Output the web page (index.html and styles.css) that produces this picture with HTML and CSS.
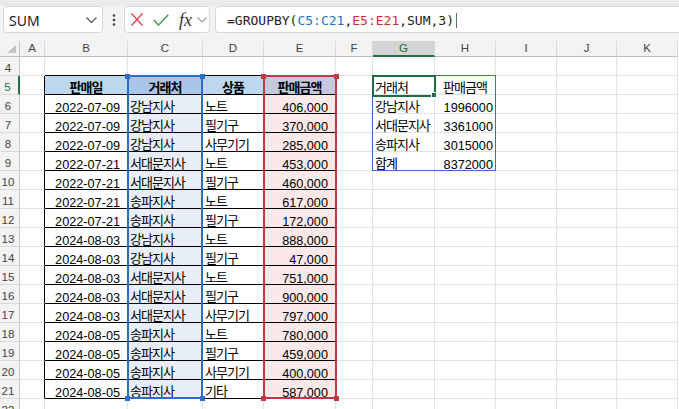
FILE: index.html
```html
<!DOCTYPE html>
<html lang="ko">
<head>
<meta charset="utf-8">
<link rel="stylesheet" href="styles.css">
</head>
<body>
<div class="edge"></div>
<div class="fbar">
  <div class="box namebox"><span>SUM</span><svg width="11" height="6" viewBox="0 0 11 6"><polyline points="0.5,0.5 5.5,5.5 10.5,0.5" fill="none" stroke="#555" stroke-width="1.2"/></svg></div>
  <div class="dots"><svg width="4" height="12" viewBox="0 0 4 12"><circle cx="2" cy="1.5" r="1.3" fill="#444"/><circle cx="2" cy="6" r="1.3" fill="#444"/><circle cx="2" cy="10.5" r="1.3" fill="#444"/></svg></div>
  <div class="box fxbox">
    <svg class="ic-x" width="12" height="13" viewBox="0 0 12 13"><path d="M0.5 0.5L11.5 12.5M11.5 0.5L0.5 12.5" stroke="#e0454f" stroke-width="1.3" fill="none"/></svg>
    <svg class="ic-ok" width="16" height="12" viewBox="0 0 16 12"><polyline points="0.7,6 5.5,11 15.3,0.7" fill="none" stroke="#3a9e4c" stroke-width="1.4"/></svg>
    <span class="fx">fx</span>
    <svg class="ic-dd" width="10" height="6" viewBox="0 0 10 6"><polyline points="0.5,0.5 5,5 9.5,0.5" fill="none" stroke="#9a9a9a" stroke-width="1.1"/></svg>
  </div>
  <div class="box formula"><span>=GROUPBY(<span class="rb">C5:C21</span>,<span class="rr">E5:E21</span>,SUM,3)</span><span class="caret"></span></div>
</div>

<div class="sheet">
  <div class="corner"><svg width="9" height="8" viewBox="0 0 9 8"><polygon points="9,0 9,8 0,8" fill="#c4c4c4"/></svg></div>
  <div class="ch">A</div><div class="ch">B</div><div class="ch">C</div><div class="ch">D</div><div class="ch">E</div><div class="ch">F</div><div class="ch sel">G</div><div class="ch">H</div><div class="ch">I</div><div class="ch">J</div><div class="ch">K</div>

  <div class="rh">4</div><div class="c"></div><div class="c tt"></div><div class="c tt"></div><div class="c tt"></div><div class="c tt"></div><div class="c"></div><div class="c"></div><div class="c"></div><div class="c"></div><div class="c"></div><div class="c"></div>

  <div class="rh sel">5</div><div class="c ta"></div><div class="c tb k hd">판매일</div><div class="c tb k hd hc">거래처</div><div class="c tb k hd">상품</div><div class="c tb k hd he">판매금액</div><div class="c"></div><div class="c k">거래처</div><div class="c k ctr">판매금액</div><div class="c"></div><div class="c"></div><div class="c"></div>

  <div class="rh">6</div><div class="c ta"></div><div class="c tb n pr">2022-07-09</div><div class="c tb k fc">강남지사</div><div class="c tb k">노트</div><div class="c tb n pr fe">406,000</div><div class="c"></div><div class="c k">강남지사</div><div class="c n">1996000</div><div class="c"></div><div class="c"></div><div class="c"></div>

  <div class="rh">7</div><div class="c ta"></div><div class="c tb n pr">2022-07-09</div><div class="c tb k fc">강남지사</div><div class="c tb k">필기구</div><div class="c tb n pr fe">370,000</div><div class="c"></div><div class="c k">서대문지사</div><div class="c n">3361000</div><div class="c"></div><div class="c"></div><div class="c"></div>

  <div class="rh">8</div><div class="c ta"></div><div class="c tb n pr">2022-07-09</div><div class="c tb k fc">강남지사</div><div class="c tb k">사무기기</div><div class="c tb n pr fe">285,000</div><div class="c"></div><div class="c k">송파지사</div><div class="c n">3015000</div><div class="c"></div><div class="c"></div><div class="c"></div>

  <div class="rh">9</div><div class="c ta"></div><div class="c tb n pr">2022-07-21</div><div class="c tb k fc">서대문지사</div><div class="c tb k">노트</div><div class="c tb n pr fe">453,000</div><div class="c"></div><div class="c k">합계</div><div class="c n">8372000</div><div class="c"></div><div class="c"></div><div class="c"></div>

  <div class="rh">10</div><div class="c ta"></div><div class="c tb n pr">2022-07-21</div><div class="c tb k fc">서대문지사</div><div class="c tb k">필기구</div><div class="c tb n pr fe">460,000</div><div class="c"></div><div class="c"></div><div class="c"></div><div class="c"></div><div class="c"></div><div class="c"></div>

  <div class="rh">11</div><div class="c ta"></div><div class="c tb n pr">2022-07-21</div><div class="c tb k fc">송파지사</div><div class="c tb k">노트</div><div class="c tb n pr fe">617,000</div><div class="c"></div><div class="c"></div><div class="c"></div><div class="c"></div><div class="c"></div><div class="c"></div>

  <div class="rh">12</div><div class="c ta"></div><div class="c tb n pr">2022-07-21</div><div class="c tb k fc">송파지사</div><div class="c tb k">필기구</div><div class="c tb n pr fe">172,000</div><div class="c"></div><div class="c"></div><div class="c"></div><div class="c"></div><div class="c"></div><div class="c"></div>

  <div class="rh">13</div><div class="c ta"></div><div class="c tb n pr">2024-08-03</div><div class="c tb k fc">강남지사</div><div class="c tb k">노트</div><div class="c tb n pr fe">888,000</div><div class="c"></div><div class="c"></div><div class="c"></div><div class="c"></div><div class="c"></div><div class="c"></div>

  <div class="rh">14</div><div class="c ta"></div><div class="c tb n pr">2024-08-03</div><div class="c tb k fc">강남지사</div><div class="c tb k">필기구</div><div class="c tb n pr fe">47,000</div><div class="c"></div><div class="c"></div><div class="c"></div><div class="c"></div><div class="c"></div><div class="c"></div>

  <div class="rh">15</div><div class="c ta"></div><div class="c tb n pr">2024-08-03</div><div class="c tb k fc">서대문지사</div><div class="c tb k">노트</div><div class="c tb n pr fe">751,000</div><div class="c"></div><div class="c"></div><div class="c"></div><div class="c"></div><div class="c"></div><div class="c"></div>

  <div class="rh">16</div><div class="c ta"></div><div class="c tb n pr">2024-08-03</div><div class="c tb k fc">서대문지사</div><div class="c tb k">필기구</div><div class="c tb n pr fe">900,000</div><div class="c"></div><div class="c"></div><div class="c"></div><div class="c"></div><div class="c"></div><div class="c"></div>

  <div class="rh">17</div><div class="c ta"></div><div class="c tb n pr">2024-08-03</div><div class="c tb k fc">서대문지사</div><div class="c tb k">사무기기</div><div class="c tb n pr fe">797,000</div><div class="c"></div><div class="c"></div><div class="c"></div><div class="c"></div><div class="c"></div><div class="c"></div>

  <div class="rh">18</div><div class="c ta"></div><div class="c tb n pr">2024-08-05</div><div class="c tb k fc">송파지사</div><div class="c tb k">노트</div><div class="c tb n pr fe">780,000</div><div class="c"></div><div class="c"></div><div class="c"></div><div class="c"></div><div class="c"></div><div class="c"></div>

  <div class="rh">19</div><div class="c ta"></div><div class="c tb n pr">2024-08-05</div><div class="c tb k fc">송파지사</div><div class="c tb k">필기구</div><div class="c tb n pr fe">459,000</div><div class="c"></div><div class="c"></div><div class="c"></div><div class="c"></div><div class="c"></div><div class="c"></div>

  <div class="rh">20</div><div class="c ta"></div><div class="c tb n pr">2024-08-05</div><div class="c tb k fc">송파지사</div><div class="c tb k">사무기기</div><div class="c tb n pr fe">400,000</div><div class="c"></div><div class="c"></div><div class="c"></div><div class="c"></div><div class="c"></div><div class="c"></div>

  <div class="rh">21</div><div class="c ta"></div><div class="c tb n pr">2024-08-05</div><div class="c tb k fc">송파지사</div><div class="c tb k">기타</div><div class="c tb n pr fe">587,000</div><div class="c"></div><div class="c"></div><div class="c"></div><div class="c"></div><div class="c"></div><div class="c"></div>

  <div class="rh">22</div><div class="c"></div><div class="c"></div><div class="c"></div><div class="c"></div><div class="c"></div><div class="c"></div><div class="c"></div><div class="c"></div><div class="c"></div><div class="c"></div><div class="c"></div>

  <div class="rng blue"><span class="hdl h-tl"></span><span class="hdl h-tr"></span><span class="hdl h-bl"></span><span class="hdl h-br"></span></div>
  <div class="rng red"><span class="hdl h-tl"></span><span class="hdl h-tr"></span><span class="hdl h-bl"></span><span class="hdl h-br"></span></div>
  <div class="spill"></div>
  <div class="active"><span class="fill"></span></div>
</div>
</body>
</html>
```

FILE: styles.css
```css
* { box-sizing: border-box; }

body {
  margin: 0;
  width: 679px;
  height: 409px;
  overflow: hidden;
  background: #fff;
  font-family: "Liberation Sans", "Noto Sans CJK KR", sans-serif;
}

/* ---------- formula bar ---------- */
.edge {
  height: 6px;
  background: #ebebeb;
}

.fbar {
  height: 35px;
  background: #f3f3f3;
  display: flex;
  align-items: flex-start;
  padding-left: 3px;
}

.box {
  height: 27px;
  background: #fff;
  border: 1px solid #d9d9d9;
  border-radius: 4px;
  display: flex;
  align-items: center;
}

.namebox {
  width: 100px;
  padding: 2px 5px 0 5px;
  justify-content: space-between;
  font-family: "Noto Sans", sans-serif;
  font-size: 14px;
  color: #222;
}
.namebox svg { margin-top: -2px; }

.dots {
  width: 21px;
  height: 27px;
  display: flex;
  align-items: center;
  justify-content: center;
}

.fxbox {
  width: 86px;
  padding-left: 6px;
}
.ic-ok { margin-left: 10px; }
.fx {
  margin-left: 10px;
  font-family: "Liberation Serif", serif;
  font-style: italic;
  font-size: 18px;
  color: #333;
  line-height: 18px;
}
.ic-dd { margin-left: 5px; }

.formula {
  flex: 1;
  margin-left: 5px;
  border-right: none;
  border-radius: 4px 0 0 4px;
  padding: 2px 0 0 11px;
  font-family: "DejaVu Sans Mono", monospace;
  font-size: 13px;
  color: #222;
}
.rb { color: #2470c4; }
.rr { color: #c8323f; }
.caret {
  display: inline-block;
  width: 1px;
  height: 15px;
  margin-left: 2px;
  background: #666;
}

/* ---------- sheet ---------- */
.sheet {
  position: relative;
  display: grid;
  grid-template-columns: 20px 25px 83px 75px 61px 72px 37px 62px 61px 61px 60px 61px;
  grid-template-rows: 16px;
  grid-auto-rows: 19px;
}

.corner {
  background: #f3f3f3;
  border-right: 1px solid #c6c6c6;
  border-bottom: 1px solid #bdbdbd;
  display: flex;
  align-items: flex-end;
  justify-content: flex-end;
  padding: 0 3px 3px 0;
}

.ch {
  background: #f3f3f3;
  border-right: 1px solid #d9d9d9;
  border-bottom: 1px solid #bdbdbd;
  text-align: center;
  font-size: 11.5px;
  line-height: 15px;
  color: #444;
}
.ch.sel {
  background: #d4d4d4;
  color: #1d6b3a;
  border-bottom: 2px solid #217346;
}

.rh {
  background: #f3f3f3;
  border-right: 1px solid #c6c6c6;
  border-bottom: 1px solid #dadada;
  text-align: center;
  font-size: 11.5px;
  line-height: 18px;
  padding: 2px 3px 0 0;
  color: #444;
}
.rh.sel {
  color: #217346;
  border-right: 2px solid #217346;
}

.c {
  border-right: 1px solid #e1e1e1;
  border-bottom: 1px solid #e1e1e1;
  white-space: nowrap;
  font-size: 12.7px;
  line-height: 18px;
  padding: 4px 2px 0 2px;
  color: #000;
}

.k {
  font-family: "Noto Sans CJK KR", sans-serif;
  font-size: 13px;
  letter-spacing: -1px;
  padding-top: 2px;
}
.n { text-align: right; }
.pr { padding-right: 7px; }
.ctr { text-align: center; }

/* table formatting */
.tb { border-right-color: #000; border-bottom-color: #000; }
.ta { border-right-color: #000; }
.tt { border-bottom-color: #000; }

.hd { background: #bdd7ee; font-weight: bold; text-align: center; }
.hd.hc { background: #a9c5ea; }
.hd.he { background: #c6c8e0; }
.fc { background: #e8eef8; }
.fe { background: #fbe9ea; }

/* ---------- overlays ---------- */
.rng {
  position: absolute;
  top: 34px;
  height: 324px;
  border: 2px solid;
}
.rng.blue { left: 127px; width: 76px; border-color: #2f6cc8; }
.rng.red { left: 263px; width: 74px; border-color: #c43843; }

.hdl {
  position: absolute;
  width: 5px;
  height: 5px;
}
.blue .hdl { background: #2f6cc8; }
.red .hdl { background: #c43843; }
.h-tl { left: -4px; top: -3px; }
.h-tr { right: -4px; top: -3px; }
.h-bl { left: -4px; bottom: -4px; }
.h-br { right: -4px; bottom: -4px; }

.spill {
  position: absolute;
  left: 372px;
  top: 34px;
  width: 124px;
  height: 96px;
  border: 1px solid #3a6fc7;
}

.active {
  position: absolute;
  left: 372px;
  top: 34px;
  width: 64px;
  height: 22px;
  border: 2px solid #1e6e42;
}
.fill {
  position: absolute;
  right: -3px;
  bottom: -3px;
  width: 6px;
  height: 6px;
  background: #1e6e42;
  border: 1px solid #fff;
}
```
